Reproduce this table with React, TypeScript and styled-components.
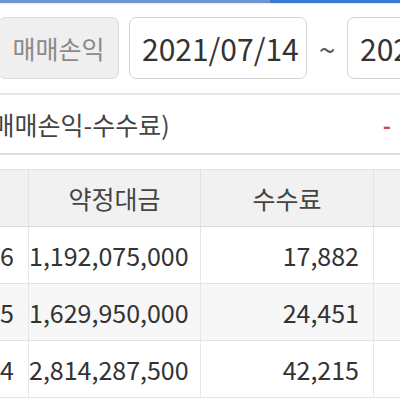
import * as React from 'react';
import styled, { createGlobalStyle } from 'styled-components';

const rows = [
    { date: '07/16', amount: '1,192,075,000', fee: '17,882' },
    { date: '07/15', amount: '1,629,950,000', fee: '24,451' },
    { date: '07/14', amount: '2,814,287,500', fee: '42,215' },
];

export default function App() {
    return (
        <Page>
            <GlobalStyle />
            <TabBar>
                <TabLine color="#6b96cf" width="270px" />
                <TabLine color="#3a7bd2" />
            </TabBar>
            <FilterRow>
                <ModeButton>매매손익</ModeButton>
                <DateBox>2021/07/14</DateBox>
                <Tilde>~</Tilde>
                <DateBox>2021/07/16</DateBox>
            </FilterRow>
            <SummaryRow>
                <SummaryLabel>(매매손익-수수료)</SummaryLabel>
                <SummaryValue>-</SummaryValue>
            </SummaryRow>
            <Table>
                <colgroup>
                    <col style={{ width: 100 }} />
                    <col style={{ width: 172 }} />
                    <col style={{ width: 173 }} />
                    <col style={{ width: 120 }} />
                </colgroup>
                <thead>
                    <tr>
                        <Head first>일자</Head>
                        <Head>약정대금</Head>
                        <Head>수수료</Head>
                        <Head>세금</Head>
                    </tr>
                </thead>
                <tbody>
                    {rows.map((r, i) => (
                        <Row key={r.date} striped={i % 2 === 1}>
                            <Cell>{r.date}</Cell>
                            <Cell>{r.amount}</Cell>
                            <Cell>{r.fee}</Cell>
                            <Cell />
                        </Row>
                    ))}
                </tbody>
            </Table>
        </Page>
    );
}

const GlobalStyle = createGlobalStyle`
    body {
        margin: 0;
        background: #fff;
        overflow: hidden;
        font-family: "Noto Sans CJK KR", "Noto Sans", sans-serif;
    }
`;

const Page = styled.div`
    width: 400px;
    height: 400px;
    overflow: hidden;
    background: #fff;
`;

const TabBar = styled.div`
    display: flex;
    height: 3px;
    border-bottom: 1px solid #e4ecf6;
`;

const TabLine = styled.div<{ color: string; width?: string }>`
    background: ${p => p.color};
    flex: ${p => (p.width ? `0 0 ${p.width}` : '1')};
`;

const FilterRow = styled.div`
    display: flex;
    align-items: center;
    margin: 13px 0 0 -2px;
    height: 62px;
    width: 600px;
`;

const ModeButton = styled.div`
    box-sizing: border-box;
    width: 121px;
    height: 62px;
    display: flex;
    align-items: center;
    justify-content: center;
    background: #efefef;
    border: 1px solid #dcdcdc;
    border-radius: 7px;
    color: #8a8a8a;
    font-size: 25px;
    margin-right: 10px;
`;

const DateBox = styled.div`
    box-sizing: border-box;
    flex: 0 0 178px;
    height: 62px;
    display: flex;
    align-items: center;
    padding-left: 12px;
    background: #fff;
    border: 1px solid #d4d4d4;
    border-radius: 7px;
    color: #333;
    font-size: 30px;
    white-space: nowrap;
`;

const Tilde = styled.div`
    width: 40px;
    text-align: center;
    color: #555;
    font-size: 30px;
`;

const SummaryRow = styled.div`
    display: flex;
    align-items: center;
    justify-content: space-between;
    margin-top: 14px;
    height: 58px;
    border-top: 2px solid #e6e6e6;
    border-bottom: 2px solid #dedede;
`;

const SummaryLabel = styled.span`
    margin-left: -17px;
    color: #444;
    font-size: 25px;
    white-space: nowrap;
`;

const SummaryValue = styled.span`
    color: #c8484d;
    font-size: 22px;
    font-weight: 700;
    margin-right: 9px;
`;

const Table = styled.table`
    border-collapse: collapse;
    margin: 14px 0 0 -72px;
    table-layout: fixed;
    width: 565px;
`;

const Head = styled.th<{ first?: boolean }>`
    height: 56px;
    padding: ${p => (p.first ? '0 40px 0 0' : '0')};
    background: #f1f1f1;
    border-top: 1px solid #e4e4e4;
    border-bottom: 1px solid #dcdcdc;
    border-left: 1px solid #e2e2e2;
    color: #444;
    font-size: 25px;
    font-weight: 400;
    overflow: hidden;
`;

const Row = styled.tr<{ striped: boolean }>`
    background: ${p => (p.striped ? '#f7f7f7' : '#fff')};
`;

const Cell = styled.td`
    height: 56px;
    padding: 0 14px 0 0;
    border-bottom: 1px solid #e3e3e3;
    border-left: 1px solid #e6e6e6;
    text-align: right;
    color: #333;
    font-size: 25px;
    white-space: nowrap;
    overflow: hidden;
`;
